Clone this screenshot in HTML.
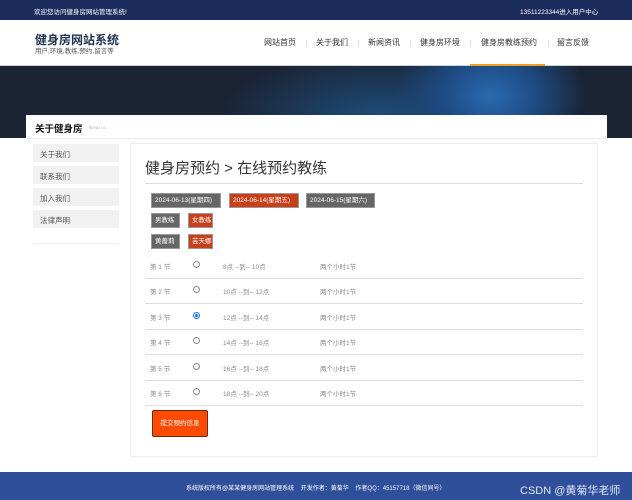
<!DOCTYPE html>
<html><head><meta charset="utf-8"><style>
*{margin:0;padding:0;box-sizing:border-box}
body{width:632px;height:500px;overflow:hidden;background:#fff;font-family:"Liberation Sans","Noto Sans CJK SC",sans-serif;position:relative}
.a{position:absolute;white-space:nowrap}
.top{left:0;top:0;width:632px;height:20px;background:#1b2c5c;color:#fff;font-size:6.5px}
.nav{font-size:8px;color:#333;top:37px}
.sep{top:40px;width:1px;height:7px;background:#ddd}
.side{left:33px;width:86px;height:18px;background:#f1f1f1;font-size:7.5px;color:#555;padding:5px 0 0 7px}
.btn{color:#fff;font-size:6.5px;padding:0 3px;height:15px;line-height:13px;border:1px solid #999}
.g{background:#666}.r{background:#c8401a}
.row{font-size:6.5px;color:#888}
.hl{left:145px;width:438px;height:1px;background:#ddd}
.rad{width:7px;height:7px;border:1px solid #888;border-radius:50%;left:193px}
</style></head><body>
<div class="a top"><span class="a" style="left:34px;top:6px">欢迎您访问健身房网站管理系统!</span><span class="a" style="left:520px;top:6px">13511223344进入用户中心</span></div>
<div class="a" style="left:35px;top:31px;font-size:12px;font-weight:bold;color:#1e3050">健身房网站系统</div>
<div class="a" style="left:35px;top:45px;font-size:6.5px;color:#555">用户,环境,教练,预约,留言等</div>
<div class="a nav" style="left:264px">网站首页</div><div class="a sep" style="left:306px"></div>
<div class="a nav" style="left:316px">关于我们</div><div class="a sep" style="left:358px"></div>
<div class="a nav" style="left:368px">新闻资讯</div><div class="a sep" style="left:410px"></div>
<div class="a nav" style="left:420px">健身房环境</div><div class="a sep" style="left:470px"></div>
<div class="a nav" style="left:481px">健身房教练预约</div><div class="a sep" style="left:548px"></div>
<div class="a nav" style="left:557px">留言反馈</div>
<div class="a" style="left:0;top:65px;width:632px;height:1px;background:#cfd6e0"></div>
<div class="a" style="left:0;top:66px;width:632px;height:72px;background:radial-gradient(ellipse 120px 90px at 490px 30px,#2a6ab0,#1d4a82 40%,transparent 80%),radial-gradient(ellipse 200px 80px at 380px 50px,#1d4c7a,transparent 80%),#1b2434"></div>
<div class="a" style="left:470px;top:64px;width:75px;height:2px;background:#f0a020"></div>
<div class="a" style="left:26px;top:115px;width:581px;height:23px;background:#fff"></div>
<div class="a" style="left:35px;top:121px;font-size:9.5px;font-weight:bold;color:#111">关于健身房</div>
<div class="a" style="left:88px;top:126px;font-size:5px;color:#bbb;font-style:italic;font-family:'Liberation Serif',serif">About us</div>
<div class="a" style="left:26px;top:138px;width:581px;height:1px;background:#eee"></div>
<div class="a side" style="top:144px">关于我们</div>
<div class="a side" style="top:166px">联系我们</div>
<div class="a side" style="top:188px">加入我们</div>
<div class="a side" style="top:210px">法律声明</div>
<div class="a" style="left:33px;top:243px;width:86px;height:1px;background:#eee"></div>
<div class="a" style="left:130px;top:143px;width:468px;height:314px;border:1px solid #eee"></div>
<div class="a" style="left:145px;top:157px;font-size:15px;color:#333">健身房预约 &gt; 在线预约教练</div>
<div class="a hl" style="top:183px"></div>
<div class="a btn g" style="left:151px;top:193px;width:70px">2024-06-13(星期四)</div>
<div class="a btn r" style="left:229px;top:193px;width:70px">2024-06-14(星期五)</div>
<div class="a btn g" style="left:306px;top:193px;width:69px">2024-06-15(星期六)</div>
<div class="a btn g" style="left:151px;top:213px;width:29px">男教练</div>
<div class="a btn r" style="left:188px;top:213px;width:25px">女教练</div>
<div class="a btn g" style="left:151px;top:234px;width:29px">黄蔷莉</div>
<div class="a btn r" style="left:188px;top:234px;width:25px">芸天娜</div>

<div class="a row" style="left:150px;top:261px">第 1 节</div><div class="a rad" style="top:261px"></div><div class="a row" style="left:223px;top:261px">8点 --到-- 10点</div><div class="a row" style="left:320px;top:261px">两个小时1节</div><div class="a hl" style="top:278px"></div>
<div class="a row" style="left:150px;top:286px">第 2 节</div><div class="a rad" style="top:286px"></div><div class="a row" style="left:223px;top:286px">10点 --到-- 12点</div><div class="a row" style="left:320px;top:286px">两个小时1节</div><div class="a hl" style="top:303px"></div>
<div class="a row" style="left:150px;top:312px">第 3 节</div><div class="a rad" style="top:312px;border-color:#1a73e8;background:radial-gradient(circle,#1a73e8 40%,#fff 45%)"></div><div class="a row" style="left:223px;top:312px">12点 --到-- 14点</div><div class="a row" style="left:320px;top:312px">两个小时1节</div><div class="a hl" style="top:329px"></div>
<div class="a row" style="left:150px;top:337px">第 4 节</div><div class="a rad" style="top:337px"></div><div class="a row" style="left:223px;top:337px">14点 --到-- 16点</div><div class="a row" style="left:320px;top:337px">两个小时1节</div><div class="a hl" style="top:354px"></div>
<div class="a row" style="left:150px;top:363px">第 5 节</div><div class="a rad" style="top:363px"></div><div class="a row" style="left:223px;top:363px">16点 --到-- 18点</div><div class="a row" style="left:320px;top:363px">两个小时1节</div><div class="a hl" style="top:380px"></div>
<div class="a row" style="left:150px;top:388px">第 6 节</div><div class="a rad" style="top:388px"></div><div class="a row" style="left:223px;top:388px">18点 --到-- 20点</div><div class="a row" style="left:320px;top:388px">两个小时1节</div><div class="a hl" style="top:405px"></div>
<div class="a" style="left:152px;top:410px;width:56px;height:27px;background:#ff4a00;border:1px solid #6a2a10;border-radius:2px;color:#fff;font-size:6.5px;text-align:center;line-height:25px">提交预约信息</div>
<div class="a" style="left:0;top:472px;width:632px;height:28px;background:#2f4f9b"></div>
<div class="a" style="left:186px;top:483px;font-size:6px;color:#fff">系统版权所有@某某健身房网站管理系统 &nbsp;&nbsp; 开发作者：黄菊华 &nbsp;&nbsp; 作者QQ：45157718（微信同号）</div>
<div class="a" style="left:520px;top:482px;font-size:11px;color:#dfe6f3">CSDN @黄菊华老师</div>
</body></html>
